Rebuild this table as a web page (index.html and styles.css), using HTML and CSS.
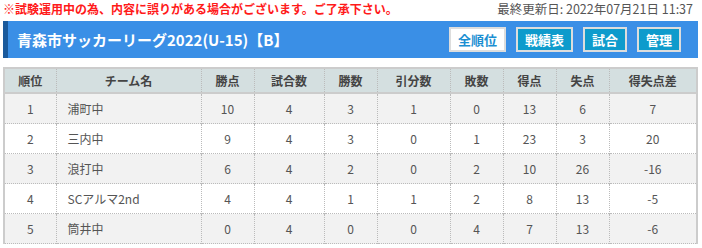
FILE: index.html
```html
<!DOCTYPE html>
<html lang="ja">
<head>
  <meta charset="UTF-8" />
  <title>青森市サッカーリーグ2022(U-15)【B】</title>
  <link rel="stylesheet" href="styles.css">
</head>
<body>
  <div class="topline">
    <p class="notice">※試験運用中の為、内容に誤りがある場合がございます。ご了承下さい。</p>
    <p class="updated">最終更新日: 2022年07月21日 11:37</p>
  </div>

  <div class="league-bar">
    <h1>青森市サッカーリーグ2022(U-15)【B】</h1>
    <nav class="tabs">
      <a class="tab active">全順位</a>
      <a class="tab">戦績表</a>
      <a class="tab">試合</a>
      <a class="tab">管理</a>
    </nav>
  </div>

  <table class="standings">
    <colgroup>
      <col style="width:52px"><col style="width:145px"><col style="width:53px"><col style="width:70px">
      <col style="width:53px"><col style="width:73px"><col style="width:53px"><col style="width:53px">
      <col style="width:53px"><col>
    </colgroup>
    <thead>
      <tr>
        <th>順位</th><th>チーム名</th><th>勝点</th><th>試合数</th><th>勝数</th>
        <th>引分数</th><th>敗数</th><th>得点</th><th>失点</th><th>得失点差</th>
      </tr>
    </thead>
    <tbody>
      <tr><td>1</td><td class="team">浦町中</td><td>10</td><td>4</td><td>3</td><td>1</td><td>0</td><td>13</td><td>6</td><td>7</td></tr>
      <tr><td>2</td><td class="team">三内中</td><td>9</td><td>4</td><td>3</td><td>0</td><td>1</td><td>23</td><td>3</td><td>20</td></tr>
      <tr><td>3</td><td class="team">浪打中</td><td>6</td><td>4</td><td>2</td><td>0</td><td>2</td><td>10</td><td>26</td><td>-16</td></tr>
      <tr><td>4</td><td class="team">SCアルマ2nd</td><td>4</td><td>4</td><td>1</td><td>1</td><td>2</td><td>8</td><td>13</td><td>-5</td></tr>
      <tr><td>5</td><td class="team">筒井中</td><td>0</td><td>4</td><td>0</td><td>0</td><td>4</td><td>7</td><td>13</td><td>-6</td></tr>
    </tbody>
  </table>
</body>
</html>
```

FILE: styles.css
```css
body {
  margin: 0;
  padding: 0 4px 0 3px;
  background: #ffffff;
  font-family: "Noto Sans CJK JP", "Noto Sans", sans-serif;
  color: #555555;
}

.topline {
  display: flex;
  justify-content: space-between;
  align-items: center;
  height: 21px;
  padding-right: 5px;
}

.topline p {
  margin: 0;
  line-height: 16px;
  position: relative;
  top: -2px;
}

.notice {
  color: #ff1a1a;
  font-weight: bold;
  font-size: 12px;
}

.updated {
  color: #555555;
  font-size: 12.5px;
}

.league-bar {
  display: flex;
  align-items: center;
  justify-content: space-between;
  height: 37px;
  background: #3a8fe6;
  border-left: 5px solid #1a5a9c;
  padding: 0 17px 0 9px;
}

.league-bar h1 {
  margin: 0;
  color: #ffffff;
  font-size: 15px;
  font-weight: bold;
}

.tabs {
  display: flex;
  gap: 10px;
}

.tab {
  display: block;
  height: 21px;
  line-height: 21px;
  padding: 0 7px;
  border: 2px solid #dddddd;
  background: #0e9bcc;
  color: #ffffff;
  font-size: 13px;
  font-weight: bold;
}

.tab.active {
  background: #ffffff;
  color: #1b8fd2;
}

.standings {
  width: 100%;
  margin-top: 9px;
  border-collapse: collapse;
  table-layout: fixed;
  border: 2px solid #cccccc;
  border-bottom: 1px dotted #bbbbbb;
  font-size: 12px;
}

.standings th {
  height: 23px;
  background: #d4dfe0;
  color: #444444;
  font-weight: bold;
  border-left: 1px dotted #bbbbbb;
  border-bottom: 2px solid #cccccc;
  padding: 0;
}

.standings td {
  height: 29px;
  padding: 0;
  text-align: center;
  border-left: 1px dotted #bbbbbb;
  border-top: 1px dotted #bbbbbb;
}

.standings tbody tr:nth-child(odd) {
  background: #f2f2f2;
}

.standings td.team {
  text-align: left;
  padding-left: 11px;
}
```
